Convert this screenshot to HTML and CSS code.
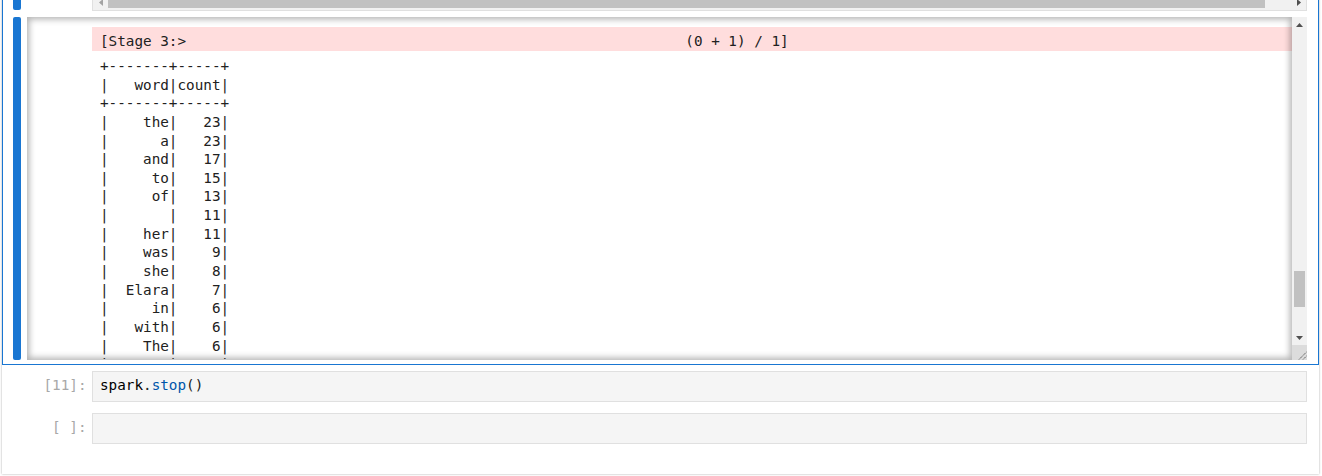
FILE: index.html
```html
<!DOCTYPE html>
<html>
<head>
<meta charset="utf-8">
<title>Notebook</title>
<link rel="stylesheet" href="styles.css">
</head>
<body>
<div class="panel">
  <div class="cell cell-active">
    <div class="cell-row input-row">
      <div class="collapser collapser-top"></div>
      <div class="prompt prompt-active"></div>
      <div class="editor editor-long">
        <div class="editor-lines"></div>
        <div class="hscroll">
          <div class="sb-btn"><svg width="4" height="7" viewBox="0 0 4 7"><path d="M0 3.5L4 0V7z" fill="#a3a3a3"/></svg></div>
          <div class="htrack"><div class="hthumb"></div></div>
          <div class="sb-btn"><svg width="4" height="7" viewBox="0 0 4 7"><path d="M4 3.5L0 0V7z" fill="#505050"/></svg></div>
        </div>
      </div>
    </div>
    <div class="cell-row output-row">
      <div class="collapser"></div>
      <div class="scrolled">
        <div class="scroll-view">
          <div class="out-prompt"></div>
          <div class="outputs">
<pre class="stream stderr">[Stage 3:&gt;                                                          (0 + 1) / 1]</pre>
<pre class="stream stdout">+-------+-----+
|   word|count|
+-------+-----+
|    the|   23|
|      a|   23|
|    and|   17|
|     to|   15|
|     of|   13|
|       |   11|
|    her|   11|
|    was|    9|
|    she|    8|
|  Elara|    7|
|     in|    6|
|   with|    6|
|    The|    6|
|     on|    5|
|     at|    5|
|    his|    4|
|     as|    4|
+-------+-----+</pre>
          </div>
        </div>
        <div class="vscroll">
          <div class="sb-btn sb-btn-v"><svg width="7" height="4" viewBox="0 0 7 4"><path d="M3.5 0L7 4H0z" fill="#505050"/></svg></div>
          <div class="vtrack"><div class="vthumb"></div></div>
          <div class="sb-btn sb-btn-v"><svg width="7" height="4" viewBox="0 0 7 4"><path d="M3.5 4L7 0H0z" fill="#505050"/></svg></div>
          <div class="resizer"><svg width="15" height="15" viewBox="0 0 15 15"><path d="M7 14.5L14.5 7M11 14.5L14.5 11" stroke="#5a5a5a" stroke-width="1" stroke-dasharray="1.4 0.6" fill="none"/></svg></div>
        </div>
      </div>
    </div>
  </div>
  <div class="cell">
    <div class="cell-row">
      <div class="prompt">[11]:</div>
      <div class="editor"><span class="cm-var">spark</span>.<span class="cm-prop">stop</span>()</div>
    </div>
  </div>
  <div class="cell">
    <div class="cell-row">
      <div class="prompt">[ ]:</div>
      <div class="editor"></div>
    </div>
  </div>
</div>
</body>
</html>
```

FILE: styles.css
```css
* { box-sizing: border-box; }

html, body {
  margin: 0;
  padding: 0;
  background: #ffffff;
}

body {
  width: 1322px;
  height: 476px;
  overflow: hidden;
  font-family: "DejaVu Sans Mono", "Liberation Mono", monospace;
  font-size: 14.3px;
  line-height: 18.64px;
  color: #212121;
}

.panel {
  margin: -35px 0 0 2px;
  width: 1317px;
  height: 509px;
  background: #ffffff;
  box-shadow: 0 0 2px rgba(0, 0, 0, 0.35);
}

.cell {
  padding: 6px 0 5px 0;
}

.cell-active {
  border: 1px solid #1976d2;
  padding: 5px 0 4px 0;
}

.cell-row {
  display: flex;
}

.collapser {
  width: 8px;
  margin-left: 10px;
  background: #1976d2;
  border-radius: 2px;
  flex: none;
}

.collapser-top {
  margin-bottom: 1px;
  border-radius: 0 0 2px 2px;
}

.prompt {
  width: 90px;
  flex: none;
  text-align: right;
  padding: 4.7px 5.5px 0 0;
  color: #a8a8a8;
  white-space: pre;
}

.prompt-active {
  width: 71px;
}

.editor {
  width: 1215px;
  height: 31px;
  flex: none;
  background: #f5f5f5;
  border: 1px solid #e0e0e0;
  padding: 3.7px 0 0 7px;
  white-space: pre;
}

.editor-long {
  height: 40px;
  padding: 0;
  display: flex;
  flex-direction: column;
}

.editor-lines {
  flex: 1;
}

.cm-var { color: #000000; }
.cm-prop { color: #0055aa; }

/* horizontal scrollbar of the long editor */
.hscroll {
  height: 15px;
  display: flex;
  background: #f1f1f1;
}

.sb-btn {
  width: 15px;
  height: 15px;
  flex: none;
  display: flex;
  align-items: center;
  justify-content: center;
}

.htrack {
  flex: 1;
}

.hthumb {
  width: 1157px;
  height: 11px;
  margin-top: 2px;
  background: #c1c1c1;
}

/* output area */
.output-row {
  margin-top: 6px;
}

.scrolled {
  margin-left: 6px;
  width: 1280px;
  height: 343px;
  display: flex;
  flex: none;
}

.scroll-view {
  position: relative;
  flex: 1;
  display: flex;
  overflow: hidden;
  padding-top: 10px;
  background: #ffffff;
}

.scroll-view::after {
  content: "";
  position: absolute;
  inset: 0;
  pointer-events: none;
  box-shadow: inset 0 0 6.6px 2.2px rgba(0, 0, 0, 0.3);
}

.out-prompt {
  width: 65px;
  flex: none;
}

.outputs {
  flex: 1;
  min-width: 0;
  height: 332.2px;
  overflow: hidden;
}

.stream {
  margin: 0;
  font: inherit;
  white-space: pre;
  padding-left: 8px;
}

.stderr {
  background: #ffdddd;
  height: 24px;
  padding-top: 5.4px;
}

.stdout {
  margin-top: 6px;
}

.vscroll {
  width: 15px;
  flex: none;
  display: flex;
  flex-direction: column;
  background: #f1f1f1;
}

.vtrack {
  flex: 1;
}

.vthumb {
  margin: 239px 2px 0 2px;
  height: 36px;
  background: #c1c1c1;
}

.resizer {
  height: 15px;
  flex: none;
  background: #dcdcdc;
}

.resizer svg {
  display: block;
}
```
